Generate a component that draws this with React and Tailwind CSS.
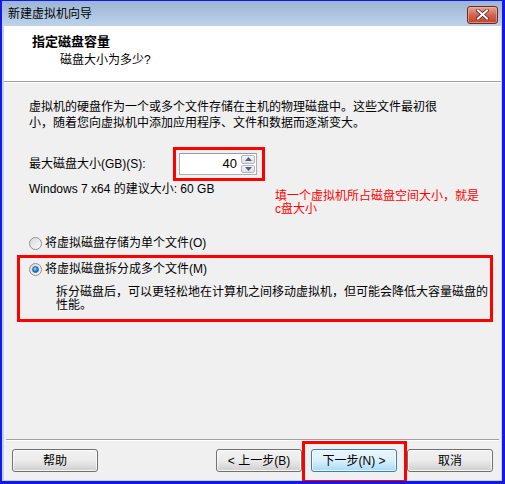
import React from "react";

const F = { fontFamily: '"Liberation Sans", "Noto Sans CJK SC", sans-serif' };

function Radio({ checked }) {
  return (
    <span className="relative inline-block w-[13px] h-[13px] rounded-full border border-[#8f8f8f] bg-gradient-to-br from-[#d8d8d8] to-[#fbfbfb] shrink-0">
      {checked && (
        <span className="absolute left-[2px] top-[2px] w-[7px] h-[7px] rounded-full bg-[radial-gradient(circle_at_40%_35%,#9fd8ff_0%,#2a8ad8_50%,#0c4f95_100%)] border border-[#1b5f9e]" />
      )}
    </span>
  );
}

function Btn({ children, primary }) {
  return (
    <div
      className={
        "h-[23px] w-[86px] rounded-[3px] border flex items-center justify-center text-[12px] text-black " +
        (primary
          ? "border-[#3c7fb1] bg-gradient-to-b from-[#eaf6fd] via-[#d9f0fc] to-[#a7d9f5] shadow-[inset_0_0_0_1px_#ffffffb0]"
          : "border-[#707070] bg-gradient-to-b from-[#f2f2f2] via-[#ebebeb] to-[#cfcfcf] shadow-[inset_0_0_0_1px_#ffffffc0]")
      }
    >
      {children}
    </div>
  );
}

export default function App() {
  return (
    <div
      style={F}
      className="w-[505px] h-[484px] flex flex-col bg-[#bcd4ec] border-l-2 border-t border-r-[3px] border-b-[3px] border-[#1616e8] overflow-hidden text-[12px] text-black"
    >
      {/* Title bar */}
      <div className="h-[25px] shrink-0 flex items-center justify-between bg-gradient-to-b from-[#9cb5d4] to-[#bcd3ea] pl-[6px] pr-[4px]">
        <span className="text-[12px] leading-[16px] text-black">新建虚拟机向导</span>
        <div className="w-[31px] h-[18px] mt-[2px] rounded-[3px] border border-[#6b2a20] bg-gradient-to-b from-[#e9a696] via-[#d0644f] to-[#c1402a] flex items-center justify-center shadow-[inset_0_0_0_1px_#f2b8a8a0]">
          <svg width="13" height="11" viewBox="0 0 13 11">
            <path d="M2 1.5 L11 9.5 M11 1.5 L2 9.5" stroke="#5a2a22" strokeWidth="3.6" strokeLinecap="square" />
            <path d="M2 1.5 L11 9.5 M11 1.5 L2 9.5" stroke="#ffffff" strokeWidth="2" strokeLinecap="square" />
          </svg>
        </div>
      </div>

      {/* Inner panel */}
      <div className="flex-1 ml-[2px] mr-[1px] mb-[1px] flex flex-col bg-[#f0f0f0] relative">
        {/* Header */}
        <div className="h-[55px] shrink-0 bg-white pl-[28px] pt-[7px]">
          <div className="text-[13px] font-bold leading-[18px]">指定磁盘容量</div>
          <div className="pl-[28px] leading-[16px] mt-[1px]">磁盘大小为多少?</div>
        </div>
        <div className="h-px bg-[#a0a0a0] shrink-0" />
        <div className="h-px bg-white shrink-0" />

        {/* Body */}
        <div className="flex-1 flex flex-col">
          <div className="pl-[25px] pt-[16px] leading-[16px] whitespace-nowrap">
            虚拟机的硬盘作为一个或多个文件存储在主机的物理磁盘中。这些文件最初很
            <br />
            小，随着您向虚拟机中添加应用程序、文件和数据而逐渐变大。
          </div>

          <div className="flex items-center pl-[25px] mt-[22px] h-[22px]">
            <span className="w-[150px] leading-[16px]">最大磁盘大小(GB)(S):</span>
            <div className="relative flex h-[22px] w-[78px] border border-[#abadb3] border-t-[#979aa1] bg-white">
              <div className="flex-1 text-right pr-[3px] leading-[20px] text-[13px]">40</div>
              <div className="w-[16px] flex flex-col gap-px p-px">
                <div className="flex-1 rounded-[2px] border border-[#b4b6bc] bg-gradient-to-b from-[#f6f6f6] to-[#dfe0e3] flex items-center justify-center">
                  <svg width="7" height="4" viewBox="0 0 7 4"><path d="M0 4 L3.5 0 L7 4 Z" fill="#4d6185" /></svg>
                </div>
                <div className="flex-1 rounded-[2px] border border-[#b4b6bc] bg-gradient-to-b from-[#f6f6f6] to-[#dfe0e3] flex items-center justify-center">
                  <svg width="7" height="4" viewBox="0 0 7 4"><path d="M0 0 L7 0 L3.5 4 Z" fill="#4d6185" /></svg>
                </div>
              </div>
              <div className="absolute -left-[7px] -top-[7px] -right-[9px] -bottom-[7px] border-[3px] border-[#ff0000] pointer-events-none" />
            </div>
          </div>

          <div className="flex pl-[25px] mt-[6px]">
            <span className="w-[246px] leading-[16px] whitespace-nowrap">Windows 7 x64 的建议大小: 60 GB</span>
            <div className="mt-[9px] text-[#ff0000] leading-[13px] whitespace-nowrap">
              填一个虚拟机所占磁盘空间大小，就是
              <br />
              c盘大小
            </div>
          </div>

          <div className="flex items-center pl-[25px] mt-[19px] h-[16px]">
            <Radio />
            <span className="ml-[3px] leading-[16px]">将虚拟磁盘存储为单个文件(O)</span>
          </div>

          <div className="ml-[13px] mr-[8px] mt-[4px] border-[3px] border-[#ff0000] pl-[9px] pt-[3px] pb-[7px]">
            <div className="flex items-center h-[16px]">
              <Radio checked />
              <span className="ml-[3px] leading-[16px]">将虚拟磁盘拆分成多个文件(M)</span>
            </div>
            <div className="pl-[27px] mt-[9px] leading-[13px] whitespace-nowrap">
              拆分磁盘后，可以更轻松地在计算机之间移动虚拟机，但可能会降低大容量磁盘的
              <br />
              性能。
            </div>
          </div>
        </div>

        {/* Footer */}
        <div className="h-px bg-[#a0a0a0] shrink-0 mx-[2px]" />
        <div className="h-px bg-white shrink-0 mx-[2px]" />
        <div className="h-[39px] shrink-0 flex items-start pt-[8px] pl-[8px] pr-[8px]">
          <Btn>帮助</Btn>
          <div className="flex-1" />
          <Btn>&lt; 上一步(B)</Btn>
          <div className="relative ml-[9px]">
            <Btn primary>下一步(N) &gt;</Btn>
            <div className="absolute -left-[9px] -top-[8px] -right-[10px] -bottom-[11px] border-[3px] border-[#ff0000] pointer-events-none" />
          </div>
          <div className="ml-[10px]">
            <Btn>取消</Btn>
          </div>
        </div>
      </div>
    </div>
  );
}
